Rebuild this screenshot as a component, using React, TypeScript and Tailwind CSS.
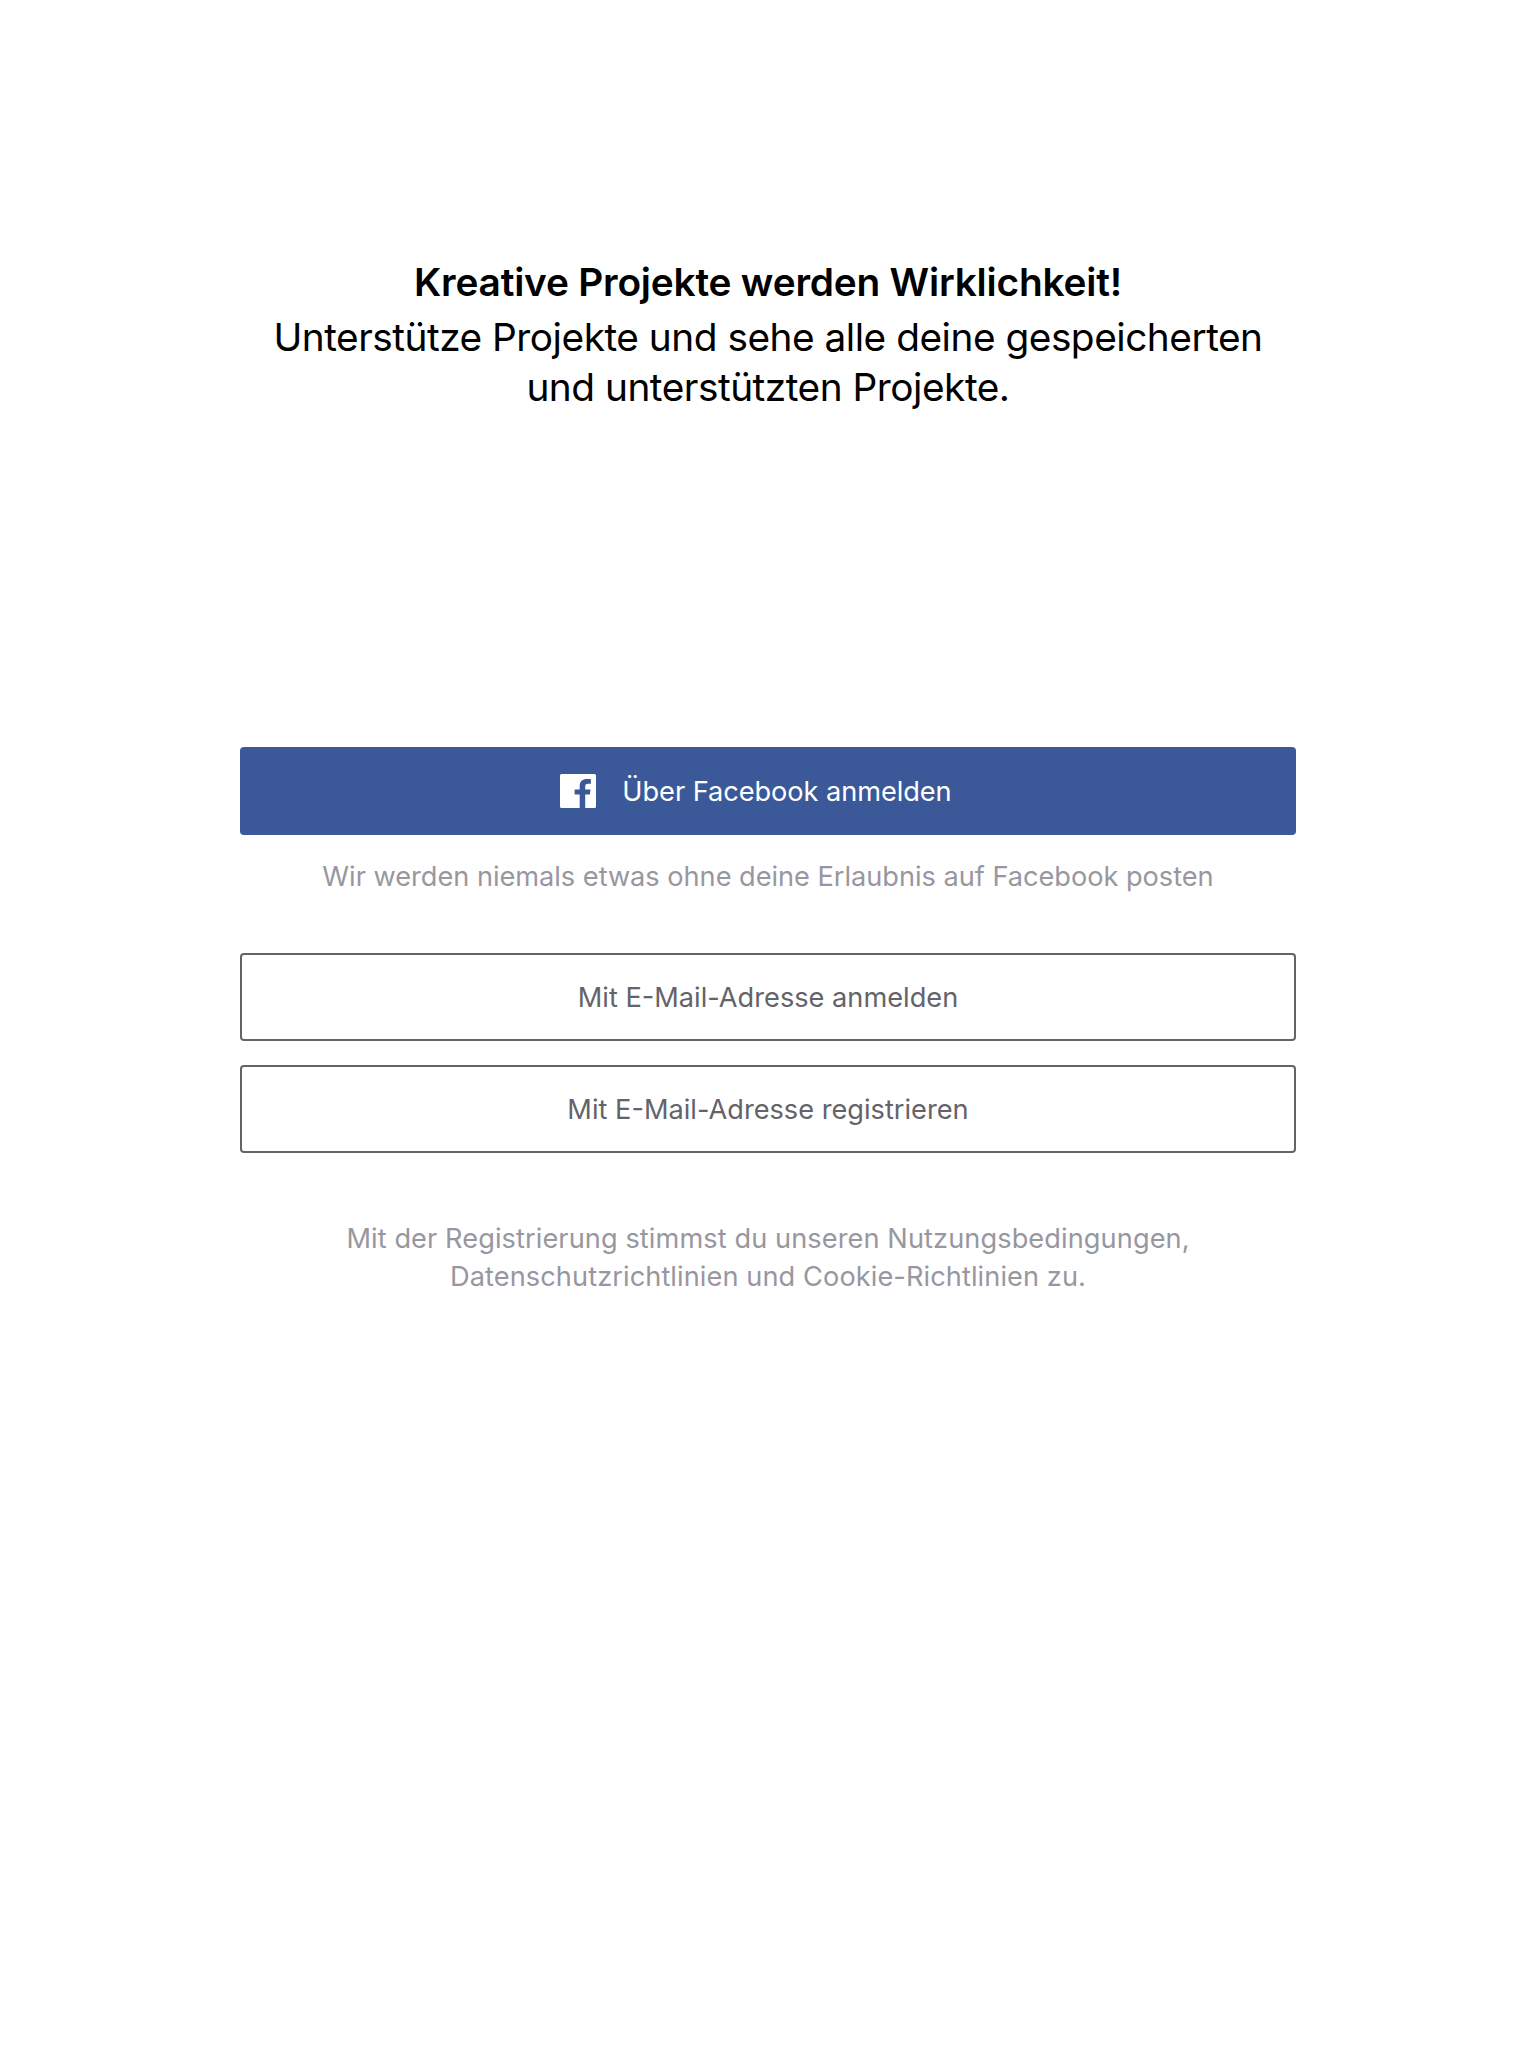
export default function App() {
  return (
    <main className="flex h-[2048px] w-[1536px] flex-col items-center bg-white px-[240px] pt-[256px] text-center font-['Inter',sans-serif]">
      <h1 className="h-[56px] text-[38.8px] leading-[52px] font-semibold tracking-[-0.2px] whitespace-nowrap text-black">Kreative Projekte werden Wirklichkeit!</h1>
      <p className="text-[38.8px] leading-[50px] tracking-[-0.49px] whitespace-nowrap text-black">
        Unterstütze Projekte und sehe alle deine gespeicherten<br />und unterstützten Projekte.
      </p>
      <button className="mt-[335px] flex h-[88px] w-full shrink-0 items-center justify-center rounded-[4px] bg-[#3b5998] pr-[24px] text-[27.2px] tracking-[-0.06px] text-white">
        <svg className="mr-[26px] h-[34px] w-[36px]" viewBox="0 0 36 34" fill="currentColor">
          <path d="M1.500 0H34.500A1.500 1.500 0 0 1 36 1.500V32.500A1.500 1.500 0 0 1 34.500 34H25.200V20.600H29.800L30.500 15.600H25.200V12.500C25.200 10.700 25.900 9.700 28 9.700H30.900V5.200C30 5 28.700 4.900 27 4.900 22.600 4.900 19.700 7.400 19.700 12V15.600H14.600V20.600H19.700V34H1.500A1.500 1.500 0 0 1 0 32.500V1.500A1.500 1.500 0 0 1 1.500 0Z" />
        </svg>
        <span className="pt-[2px]">Über Facebook anmelden</span>
      </button>
      <p className="mt-[23px] text-[27.2px] leading-[38px] tracking-[-0.03px] whitespace-nowrap text-[#98979f]">Wir werden niemals etwas ohne deine Erlaubnis auf Facebook posten</p>
      <button className="mt-[57px] h-[88px] w-full shrink-0 rounded-[4px] border-2 border-[#646369] pt-[2px] text-[27.2px] text-[#646369]">Mit E-Mail-Adresse anmelden</button>
      <button className="mt-[24px] h-[88px] w-full shrink-0 rounded-[4px] border-2 border-[#646369] pt-[2px] text-[27.2px] text-[#646369]">Mit E-Mail-Adresse registrieren</button>
      <p className="mt-[67px] text-[27.2px] leading-[38px] tracking-[0.08px] whitespace-nowrap text-[#98979f]">
        Mit der Registrierung stimmst du unseren Nutzungsbedingungen,<br />Datenschutzrichtlinien und Cookie-Richtlinien zu.
      </p>
    </main>
  );
}
